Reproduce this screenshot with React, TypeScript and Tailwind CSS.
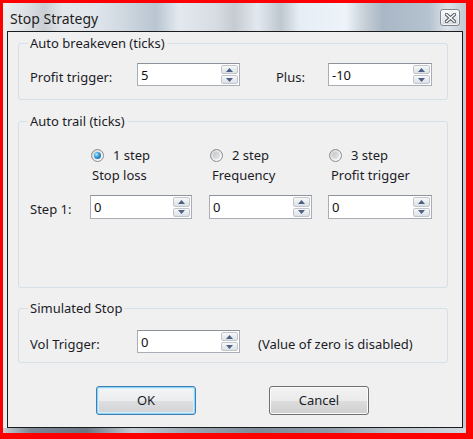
import React from "react";

function Arrow({ up }: { up?: boolean }) {
  return (
    <svg width="7" height="4" viewBox="0 0 7 4">
      {up ? (
        <polygon points="0,4 7,4 3.5,0" fill="#4d6185" />
      ) : (
        <polygon points="0,0 7,0 3.5,4" fill="#4d6185" />
      )}
    </svg>
  );
}

function SpinBtn({ up }: { up?: boolean }) {
  return (
    <div className="flex-1 flex items-center justify-center border border-[#c2c6cc] rounded-[2px] bg-[linear-gradient(180deg,#f7f8f9_0%,#e9ecef_50%,#dde1e6_100%)]">
      <Arrow up={up} />
    </div>
  );
}

function Spin({ className, value }: { className: string; value: string }) {
  return (
    <div
      className={`${className} flex border border-[#a9aeb6] border-t-[#8d939b] bg-white`}
    >
      <span className="flex-1 self-center pl-[3px] text-[13px] leading-[16px] text-[#111]">
        {value}
      </span>
      <div className="flex w-[18px] flex-col gap-[1px] py-[1px] pr-[1px]">
        <SpinBtn up />
        <SpinBtn />
      </div>
    </div>
  );
}

function Radio({ checked, label }: { checked?: boolean; label: string }) {
  return (
    <div className="flex items-center gap-[9px]">
      <div className="ml-[1px] flex h-[13px] w-[13px] items-center justify-center rounded-full border border-[#8a8c8e] bg-[linear-gradient(135deg,#cfd1d3_0%,#f4f4f4_70%,#ffffff_100%)]">
        {checked ? (
          <div className="h-[7px] w-[7px] rounded-full bg-[radial-gradient(circle_at_35%_35%,#b8ecff_0%,#3b9fdc_40%,#0d4f8c_100%)]" />
        ) : (
          <div className="h-[7px] w-[7px] rounded-full bg-[linear-gradient(135deg,#c4c6c8_0%,#e6e7e8_100%)]" />
        )}
      </div>
      <span className="text-[13px] leading-[18px] text-[#1c1c28]">{label}</span>
    </div>
  );
}

function Legend({ children }: { children: React.ReactNode }) {
  return (
    <legend className="-ml-[2px] px-[2px] text-[13px] leading-[16px] text-[#1c1c28]">
      {children}
    </legend>
  );
}

export default function App() {
  return (
    <div className="h-[439px] w-[473px] bg-[#fe0000] pb-[6px] pl-[3px] pr-[7px] pt-[3px] font-['Noto_Sans',sans-serif]">
      <div className="flex h-full flex-col bg-[linear-gradient(90deg,#eef0f2_0%,#dde1e5_5%,#c9ced3_9%,#e4e8ec_13%,#dfe5eb_20%,#d0d8e0_26%,#b9c5d1_33%,#e3e9ef_38%,#d6dce2_46%,#c5cbd1_50%,#e2e8ee_55%,#bfc7cf_60%,#e6edf4_64%,#edf3f9_74%,#c8d0d8_78%,#a9b7c6_82%,#b5c2cf_92%,#dde3e9_96%,#c0c8d0_100%)]">
        {/* title bar */}
        <div className="flex h-[28px] items-start justify-between">
          <span className="pl-[7px] pt-[6px] text-[14px] leading-[20px] text-[#1e1e1e]">
            Stop Strategy
          </span>
          <div className="mr-[6px] mt-[6px] flex h-[17px] w-[20px] items-center justify-center rounded-[3px] border border-[#7f868e] bg-[linear-gradient(180deg,#fafbfc_0%,#e9ecef_50%,#d6dbe0_100%)] shadow-[inset_0_0_0_1px_#ffffffaa]">
            <svg width="11" height="10" viewBox="0 0 11 10">
              <path
                d="M1.5 1.5 L9.5 8.5 M9.5 1.5 L1.5 8.5"
                stroke="#50565d"
                strokeWidth="3.4"
                strokeLinecap="square"
              />
              <path
                d="M1.5 1.5 L9.5 8.5 M9.5 1.5 L1.5 8.5"
                stroke="#ffffff"
                strokeWidth="1.4"
                strokeLinecap="square"
              />
            </svg>
          </div>
        </div>

        {/* client area */}
        <div className="ml-[4px] mr-[3px] flex flex-1 flex-col border border-[#1b1b1b] bg-[#f0f0f0] pl-[10px] pr-[14px] pt-[3px]">
          {/* Auto breakeven */}
          <fieldset className="rounded-[3px] border border-[#d5dfe5] pb-[13px] pl-[11px] pr-[10px] pt-[12px]">
            <Legend>Auto breakeven (ticks)</Legend>
            <div className="flex items-center">
              <span className="mt-[4px] w-[107px] text-[13px] leading-[16px] text-[#1c1c28]">
                Profit trigger:
              </span>
              <Spin className="h-[23px] w-[103px]" value="5" />
              <span className="ml-[36px] mt-[4px] w-[52px] text-[13px] leading-[16px] text-[#1c1c28]">
                Plus:
              </span>
              <Spin className="h-[23px] w-[104px]" value="-10" />
            </div>
          </fieldset>

          {/* Auto trail */}
          <fieldset className="mt-[13px] h-[175px] rounded-[3px] border border-[#d5dfe5] pl-[11px] pr-[10px] pt-[17px]">
            <Legend>Auto trail (ticks)</Legend>
            <div className="grid grid-cols-[44px_103px_103px_103px] gap-x-[16px]">
              <div />
              <Radio checked label="1 step" />
              <Radio label="2 step" />
              <Radio label="3 step" />

              <div className="mt-[2px]" />
              <span className="mt-[2px] pl-[2px] text-[13px] leading-[18px] text-[#1c1c28]">
                Stop loss
              </span>
              <span className="mt-[2px] pl-[3px] text-[13px] leading-[18px] text-[#1c1c28]">
                Frequency
              </span>
              <span className="mt-[2px] pl-[3px] text-[13px] leading-[18px] text-[#1c1c28]">
                Profit trigger
              </span>

              <span className="mt-[11px] flex h-[24px] items-center pt-[4px] text-[13px] leading-[16px] text-[#1c1c28]">
                Step 1:
              </span>
              <Spin className="mt-[11px] h-[24px] w-[102px]" value="0" />
              <Spin className="mt-[11px] h-[24px] w-[103px]" value="0" />
              <Spin className="mt-[11px] h-[24px] w-[104px]" value="0" />
            </div>
          </fieldset>

          {/* Simulated Stop */}
          <fieldset className="mt-[12px] rounded-[3px] border border-[#d5dfe5] pb-[9px] pl-[11px] pr-[10px] pt-[14px]">
            <Legend>Simulated Stop</Legend>
            <div className="flex items-center">
              <span className="mt-[4px] w-[107px] text-[13px] leading-[16px] text-[#1c1c28]">
                Vol Trigger:
              </span>
              <Spin className="h-[23px] w-[103px]" value="0" />
              <span className="ml-[18px] mt-[4px] text-[13px] leading-[16px] text-[#1c1c28]">
                (Value of zero is disabled)
              </span>
            </div>
          </fieldset>

          {/* buttons */}
          <div className="ml-[78px] mt-[23px] flex gap-[73px]">
            <button className="flex h-[29px] w-[100px] items-center justify-center rounded-[3px] border border-[#3c7fb1] bg-[linear-gradient(180deg,#f4f5f6_0%,#ebecee_50%,#dddfe1_51%,#d0d2d5_100%)] text-[13px] text-[#1c1c28] shadow-[inset_0_0_0_1px_#93d4f4,inset_0_0_0_2px_#d4eefb]">
              OK
            </button>
            <button className="flex h-[29px] w-[100px] items-center justify-center rounded-[3px] border border-[#707070] bg-[linear-gradient(180deg,#f2f2f2_0%,#ebebeb_50%,#dddddd_51%,#cfcfcf_100%)] text-[13px] text-[#1c1c28] shadow-[inset_0_0_0_1px_#fbfbfb]">
              Cancel
            </button>
          </div>
        </div>

        {/* bottom glass strip */}
        <div className="h-[5px] bg-[linear-gradient(90deg,#c8cdd2_0%,#7b8794_6%,#6a7683_18%,#c3ccd5_28%,#9aa6b2_40%,#7d8b99_55%,#8d9aa7_70%,#b9c3cd_85%,#cfd6dd_100%)]" />
      </div>
    </div>
  );
}
